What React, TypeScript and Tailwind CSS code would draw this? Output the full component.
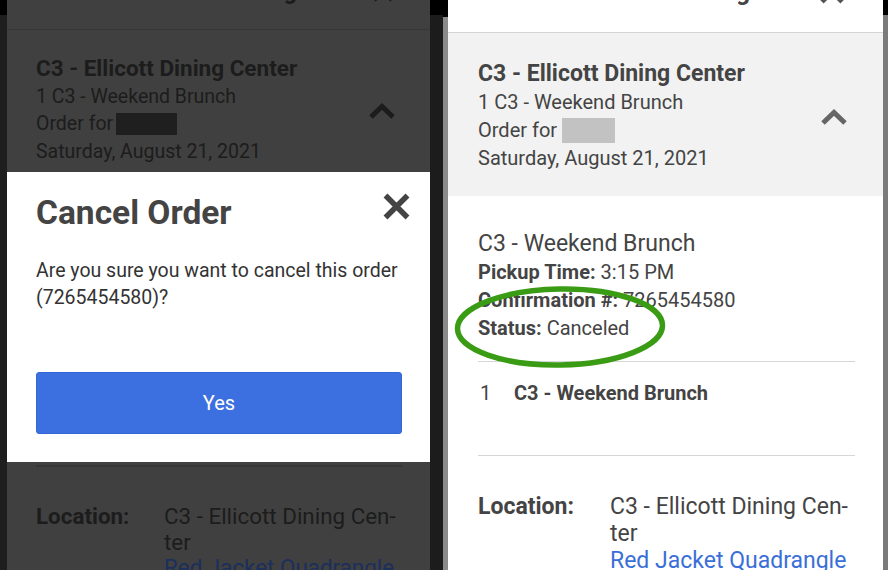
import React from 'react';

// thick "X" close glyph, flat ends
function CloseIcon({ className, color }: { className: string; color: string }) {
  return (
    <svg viewBox="0 0 27 27" className={className} fill="none" stroke={color} strokeWidth={5.5}>
      <path d="M2.5 2.5L24.5 24.5M24.5 2.5L2.5 24.5" />
    </svg>
  );
}

function ChevronUp({ className, color }: { className: string; color: string }) {
  return (
    <svg viewBox="0 0 26 16" className={className} fill="none" stroke={color} strokeWidth={5}>
      <path d="M2 14L13 3.5L24 14" />
    </svg>
  );
}

// header strip: only the bottoms of the title and icon peek in
function CutHeader({ dim }: { dim?: boolean }) {
  return (
    <div
      className={
        dim
          ? 'h-[30px] shrink-0 overflow-hidden border-b border-[#373737] bg-[#404040]'
          : 'h-[33px] shrink-0 overflow-hidden border-b border-[#d4d4d4] bg-white'
      }
    >
      <div className="flex items-start -mt-[20px]">
        <div
          className={
            dim
              ? 'w-[290px] text-right text-[23px] leading-[23px] font-bold text-[#1c1c1c]'
              : 'w-[302px] text-right text-[24px] leading-[24px] font-bold text-[#444]'
          }
        >
          Ordering
        </div>
        {dim ? (
          <CloseIcon className="ml-[75px] mt-[-1px] h-[24px] w-[22px]" color="#1c1c1c" />
        ) : (
          <CloseIcon className="ml-[67px] mt-[-1px] h-[25px] w-[30px]" color="#555" />
        )}
      </div>
    </div>
  );
}

function LeftScreen() {
  return (
    <div className="flex w-[423px] shrink-0 flex-col overflow-hidden bg-[#404040] text-[#1c1c1c]">
      <CutHeader dim />

      {/* dimmed accordion header */}
      <div className="flex h-[142px] shrink-0 items-start justify-between pl-[29px] pr-[35px] pt-[25px]">
        <div>
          <div className="text-[22.5px] leading-[27.5px] font-bold">C3 - Ellicott Dining Center</div>
          <div className="text-[19.5px] leading-[27.5px]">1 C3 - Weekend Brunch</div>
          <div className="flex items-center text-[19.5px] leading-[27.5px]">
            Order for
            <span className="ml-[3px] inline-block h-[22px] w-[61px] bg-[#1f1f1f]" />
          </div>
          <div className="text-[19.5px] leading-[27.5px]">Saturday, August 21, 2021</div>
        </div>
        <ChevronUp className="mt-[48px] h-[16px] w-[26px]" color="#1c1c1c" />
      </div>

      {/* modal */}
      <div className="flex h-[290px] shrink-0 flex-col bg-white pl-[29px] pr-[28px]">
        <div className="flex items-start justify-between pt-[21px]">
          <div className="mt-[1px] text-[33.5px] leading-[38px] font-bold text-[#444]">Cancel Order</div>
          <CloseIcon className="-mr-[8px] h-[27px] w-[27px]" color="#444" />
        </div>
        <div className="mt-[25px] text-[19.5px] leading-[27px] text-[#333]">
          Are you sure you want to cancel this order (7265454580)?
        </div>
        <button className="mt-[61px] h-[62px] w-full shrink-0 rounded-[3px] border border-[#3467d6] bg-[#3c70e0] text-[20px] text-white">
          Yes
        </button>
      </div>

      {/* dimmed rest */}
      <div className="shrink-0 pl-[29px] pr-[28px]">
        <div className="mt-[3px] h-[2px] bg-[#363636]" />
        <div className="mt-[37px] flex text-[22.4px] leading-[25.5px]">
          <div className="w-[128px] shrink-0 font-bold">Location:</div>
          <div className="whitespace-nowrap">
            C3 - Ellicott Dining Cen-
            <br />
            ter
            <div className="text-[#1b2f5c]">Red Jacket Quadrangle</div>
          </div>
        </div>
      </div>
    </div>
  );
}

function RightScreen() {
  return (
    <div className="relative flex w-[435px] shrink-0 flex-col overflow-hidden bg-white text-[#444]">
      <CutHeader />

      {/* accordion header */}
      <div className="flex h-[163px] shrink-0 items-start justify-between bg-[#f2f2f2] pl-[30px] pr-[36px] pt-[27px]">
        <div>
          <div className="text-[23px] leading-[28px] font-bold">C3 - Ellicott Dining Center</div>
          <div className="text-[20px] leading-[28px]">1 C3 - Weekend Brunch</div>
          <div className="flex items-center text-[20px] leading-[28px]">
            Order for
            <span className="ml-[5px] inline-block h-[25px] w-[53px] bg-[#c2c2c2]" />
          </div>
          <div className="text-[20px] leading-[28px]">Saturday, August 21, 2021</div>
        </div>
        <ChevronUp className="mt-[49px] h-[16px] w-[26px]" color="#666" />
      </div>

      {/* order details */}
      <div className="shrink-0 pl-[30px] pr-[28px]">
        <div className="mt-[34px] text-[23px] leading-[28px]">C3 - Weekend Brunch</div>
        <div className="text-[20px] leading-[28px]">
          <span className="font-bold">Pickup Time:</span> 3:15 PM
        </div>
        <div className="text-[20px] leading-[28px]">
          <span className="font-bold">Confirmation #:</span> 7265454580
        </div>
        <div className="text-[20px] leading-[28px]">
          <span className="font-bold">Status:</span> Canceled
        </div>

        <div className="mt-[19px] h-px bg-[#d6d6d6]" />
        <div className="mt-[17px] flex text-[20px] leading-[28px]">
          <div className="w-[36px] pl-[2px]">1</div>
          <div className="font-bold">C3 - Weekend Brunch</div>
        </div>

        <div className="mt-[48px] h-px bg-[#d6d6d6]" />
        <div className="mt-[37px] flex text-[23px] leading-[27px]">
          <div className="w-[132px] shrink-0 font-bold">Location:</div>
          <div className="whitespace-nowrap">
            C3 - Ellicott Dining Cen-
            <br />
            ter
            <div className="text-[#3a6fd8]">Red Jacket Quadrangle</div>
          </div>
        </div>
      </div>

      {/* hand-drawn highlight around the status */}
      <svg className="pointer-events-none absolute left-[4px] top-[284px] h-[88px] w-[218px]" viewBox="0 0 218 88" fill="none">
        <ellipse cx="108" cy="43" rx="102.5" ry="38" stroke="#3a9c14" strokeWidth="5.5" transform="rotate(-1 108 43)" />
      </svg>
    </div>
  );
}

export default function App() {
  return (
    <div className="flex h-[570px] w-[888px] overflow-hidden bg-[#1c1c1c] font-['Roboto',sans-serif]">
      <div className="flex w-[7px] shrink-0 flex-col">
        <div className="h-[15px] bg-black" />
        <div className="flex-1 bg-[#1e1e1e]" />
      </div>
      <LeftScreen />
      <div className="flex w-[13px] shrink-0 flex-col">
        <div className="h-[15px] bg-black" />
        <div className="flex-1 bg-[#1c1c1c]" />
      </div>
      <div className="flex w-[5px] shrink-0 flex-col">
        <div className="h-[17px] bg-black" />
        <div className="flex-1 bg-[#8a8a8a]" />
      </div>
      <RightScreen />
      <div className="flex w-[5px] shrink-0 flex-col">
        <div className="h-[15px] bg-black" />
        <div className="flex-1 bg-[#7a7a7a]" />
      </div>
    </div>
  );
}
